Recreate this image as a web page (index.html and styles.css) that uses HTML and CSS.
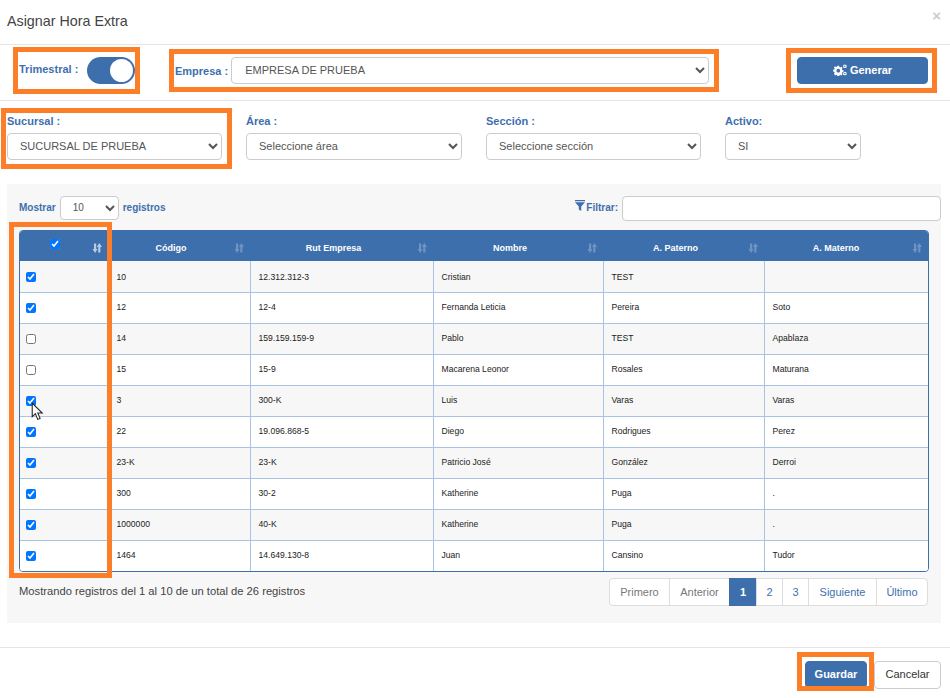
FILE: index.html
```html
<!DOCTYPE html>
<html lang="es">
<head>
    <meta charset="UTF-8">
    <title>Asignar Hora Extra</title>
    <link rel="stylesheet" href="styles.css">
</head>
<body>
    <svg class="icon-defs" width="0" height="0">
        <symbol id="sort" viewBox="0 0 10 10">
            <path d="M0.500 6h1.500V0.500h2.200V6h1.300L3.100 10zM4.800 4h1.400V9.500h2.200V4H10L7.400 0z"/>
        </symbol>
    </svg>

    <div class="modal">
        <div class="modal-header">
            <h4>Asignar Hora Extra</h4>
            <span class="close">&times;</span>
        </div>

        <div class="top-row">
            <div class="trimestral">
                <label>Trimestral :</label>
                <span class="toggle"><span class="toggle-knob"></span></span>
            </div>
            <div class="empresa">
                <label>Empresa :</label>
                <select class="field"><option>EMPRESA DE PRUEBA</option></select>
            </div>
            <button type="button" class="btn btn-primary btn-generar">
                <svg class="gear" viewBox="0 0 16 14" width="14" height="12">
                    <path fill="#fff" fill-rule="evenodd" d="M5 2h2l.3 1.5 1 .5 1.4-.8 1.3 1.4-.8 1.3.4 1.1 1.4.3v2l-1.4.3-.4 1.1.8 1.3-1.3 1.4-1.4-.8-1 .4-.3 1.5H5l-.3-1.5-1-.4-1.4.8L1 11.5l.8-1.3-.4-1.1L0 8.800v-2l1.400-.3.400-1.100L1 4.100l1.300-1.400 1.400.8 1-.5zM6 5.600a2.200 2.200 0 1 0 0 4.400 2.200 2.200 0 0 0 0-4.400z"/>
                    <path fill="none" stroke="#fff" stroke-width="1.300" d="M13.700 1.100a1.500 1.500 0 1 0 0 3 1.500 1.500 0 0 0 0-3zM13.700 9.600a1.500 1.500 0 1 0 0 3 1.500 1.500 0 0 0 0-3z"/>
                </svg>
                Generar
            </button>
        </div>

        <div class="filters">
            <div class="filter filter-sucursal">
                <label>Sucursal :</label>
                <select class="field"><option>SUCURSAL DE PRUEBA</option></select>
            </div>
            <div class="filter filter-area">
                <label>Área :</label>
                <select class="field"><option>Seleccione área</option></select>
            </div>
            <div class="filter filter-seccion">
                <label>Sección :</label>
                <select class="field"><option>Seleccione sección</option></select>
            </div>
            <div class="filter filter-activo">
                <label>Activo:</label>
                <select class="field"><option>SI</option></select>
            </div>
        </div>

        <div class="panel">
            <div class="panel-top">
                <div class="length">
                    Mostrar
                    <select class="field field-length"><option>10</option></select>
                    registros
                </div>
                <div class="search">
                    <svg class="funnel" viewBox="0 0 10 11" width="10" height="11">
                        <path fill="#3e6fad" d="M0 0h10v1.200H0zM0 2.200h10L6.200 6.500V11L3.800 9.600V6.500z"/>
                    </svg>
                    <span>Filtrar:</span>
                    <input type="text" class="field search-input">
                </div>
            </div>

            <div class="table-wrap">
                <table>
                    <colgroup>
                        <col class="col-check">
                        <col class="col-codigo">
                        <col class="col-rut">
                        <col class="col-nombre">
                        <col class="col-paterno">
                        <col class="col-materno">
                    </colgroup>
                    <thead>
                        <tr>
                            <th class="th-check"><input type="checkbox" checked><svg class="sort sort-on"><use href="#sort"/></svg></th>
                            <th>Código<svg class="sort"><use href="#sort"/></svg></th>
                            <th>Rut Empresa<svg class="sort"><use href="#sort"/></svg></th>
                            <th>Nombre<svg class="sort"><use href="#sort"/></svg></th>
                            <th>A. Paterno<svg class="sort"><use href="#sort"/></svg></th>
                            <th class="th-last">A. Materno<svg class="sort"><use href="#sort"/></svg></th>
                        </tr>
                    </thead>
                    <tbody>
                        <tr><td><input type="checkbox" checked></td><td>10</td><td>12.312.312-3</td><td>Cristian</td><td>TEST</td><td></td></tr>
                        <tr><td><input type="checkbox" checked></td><td>12</td><td>12-4</td><td>Fernanda Leticia</td><td>Pereira</td><td>Soto</td></tr>
                        <tr><td><input type="checkbox"></td><td>14</td><td>159.159.159-9</td><td>Pablo</td><td>TEST</td><td>Apablaza</td></tr>
                        <tr><td><input type="checkbox"></td><td>15</td><td>15-9</td><td>Macarena Leonor</td><td>Rosales</td><td>Maturana</td></tr>
                        <tr><td><input type="checkbox" checked></td><td>3</td><td>300-K</td><td>Luis</td><td>Varas</td><td>Varas</td></tr>
                        <tr><td><input type="checkbox" checked></td><td>22</td><td>19.096.868-5</td><td>Diego</td><td>Rodrigues</td><td>Perez</td></tr>
                        <tr><td><input type="checkbox" checked></td><td>23-K</td><td>23-K</td><td>Patricio José</td><td>González</td><td>Derroi</td></tr>
                        <tr><td><input type="checkbox" checked></td><td>300</td><td>30-2</td><td>Katherine</td><td>Puga</td><td>.</td></tr>
                        <tr><td><input type="checkbox" checked></td><td>1000000</td><td>40-K</td><td>Katherine</td><td>Puga</td><td>.</td></tr>
                        <tr><td><input type="checkbox" checked></td><td>1464</td><td>14.649.130-8</td><td>Juan</td><td>Cansino</td><td>Tudor</td></tr>
                    </tbody>
                </table>
            </div>

            <div class="panel-bottom">
                <div class="info">Mostrando registros del 1 al 10 de un total de 26 registros</div>
                <ul class="pagination">
                    <li class="disabled w-primero">Primero</li>
                    <li class="disabled w-anterior">Anterior</li>
                    <li class="active w-active">1</li>
                    <li class="w-num">2</li>
                    <li class="w-num">3</li>
                    <li class="w-siguiente">Siguiente</li>
                    <li class="w-ultimo">Último</li>
                </ul>
            </div>
        </div>

        <div class="modal-footer">
            <button type="button" class="btn btn-primary btn-guardar">Guardar</button>
            <button type="button" class="btn btn-default">Cancelar</button>
        </div>
    </div>

    <!-- annotations drawn on top of the screenshot -->
    <div class="mark mark-trimestral"></div>
    <div class="mark mark-empresa"></div>
    <div class="mark mark-generar"></div>
    <div class="mark mark-sucursal"></div>
    <div class="mark mark-column"></div>
    <div class="mark mark-guardar"></div>

    <svg class="cursor" viewBox="0 0 12 18" width="13" height="19">
        <path fill="#fff" stroke="#222" stroke-width="1" d="M1 1v13l3-3 2.200 5.500 2.300-1L6.300 10.500H10.500z"/>
    </svg>
</body>
</html>
```

FILE: styles.css
```css
* {
    box-sizing: border-box;
}

html, body {
    height: 100%;
}

body {
    margin: 0;
    position: relative;
    overflow: hidden;
    background-color: #fff;
    font-family: "Liberation Sans", Arial, sans-serif;
    font-size: 11px;
    color: #333;
}

.icon-defs {
    position: absolute;
}

label {
    flex: none;
    font-weight: bold;
    font-size: 11px;
    color: #3e6fad;
}

.field {
    height: 27px;
    border: 1px solid #ccc;
    border-radius: 4px;
    background-color: #fff;
    padding: 0 8px 2px;
    font-family: inherit;
    font-size: 11px;
    color: #555;
}

.modal-header {
    position: relative;
    height: 45px;
    padding: 13px 7px 0;
    border-bottom: 1px solid #e5e5e5;
}

.modal-header h4 {
    margin: 0;
    font-size: 14.300px;
    line-height: 17px;
    font-weight: normal;
    color: #444;
}

.close {
    position: absolute;
    top: 7px;
    right: 9px;
    font-size: 15px;
    font-weight: bold;
    color: #ccc;
}

.top-row {
    display: flex;
    align-items: center;
    height: 56px;
    padding: 0 22px 4px 19px;
    border-bottom: 1px solid #e5e5e5;
}

.trimestral {
    display: flex;
    align-items: center;
    gap: 9px;
    width: 156px;
}

.trimestral label {
    margin-bottom: 4px;
}

.toggle {
    display: flex;
    justify-content: flex-end;
    align-items: center;
    width: 48px;
    height: 27px;
    padding-right: 2px;
    border-radius: 14px;
    background-color: #3e6fad;
}

.toggle-knob {
    width: 23px;
    height: 23px;
    border-radius: 50%;
    background-color: #fff;
}

.empresa {
    display: flex;
    align-items: center;
    gap: 3px;
    width: 534px;
}

.empresa .field {
    width: 478px;
    padding-left: 9px;
}

.btn {
    border-radius: 4px;
    font-family: inherit;
    font-size: 11px;
    font-weight: bold;
    height: 27px;
    padding: 0 0 2px;
}

.btn-primary {
    border: 1px solid #3e6fad;
    background-color: #3e6fad;
    color: #fff;
}

.btn-generar {
    display: flex;
    justify-content: center;
    align-items: center;
    gap: 3px;
    width: 131px;
    margin-left: auto;
}

.filters {
    display: flex;
    gap: 24px;
    height: 83px;
    padding: 13px 7px 0;
}

.filter {
    display: flex;
    flex-direction: column;
    gap: 5px;
}

.filter label {
    line-height: 14px;
}

.filter-sucursal { width: 215px; }
.filter-area { width: 216px; }
.filter-seccion { width: 215px; }
.filter-activo { width: 136px; }

.panel {
    width: 934px;
    height: 439px;
    margin-left: 7px;
    padding: 12px 0 0 12px;
    background-color: #f7f7f7;
}

.panel-top {
    display: flex;
    justify-content: space-between;
    height: 34px;
}

.length {
    display: flex;
    align-items: flex-start;
    gap: 4px;
    line-height: 23px;
    font-weight: bold;
    font-size: 10px;
    color: #3e6fad;
}

.field-length {
    width: 59px;
    height: 24px;
    font-size: 10px;
    padding-left: 8px;
}

.search {
    display: flex;
    align-items: flex-start;
    font-size: 10px;
    font-weight: bold;
    color: #3e6fad;
    line-height: 23px;
}

.funnel {
    margin-top: 4px;
    margin-right: 1px;
}

.search-input {
    width: 319px;
    height: 25px;
    margin-left: 4px;
}

.table-wrap {
    width: 910px;
    border: 1px solid #3e6fad;
    border-radius: 4px;
    overflow: hidden;
}

table {
    width: 100%;
    table-layout: fixed;
    border-collapse: collapse;
}

.col-check { width: 88px; }
.col-codigo { width: 142px; }
.col-rut { width: 183px; }
.col-nombre { width: 170px; }
.col-paterno { width: 161px; }

th {
    position: relative;
    height: 30px;
    background-color: #3e6fad;
    font-size: 9px;
    font-weight: bold;
    color: #fff;
    text-align: center;
    padding: 3px 16px 0 0;
}

.th-last {
    padding-right: 20px;
}

td {
    height: 31px;
    padding: 0 8px 2px;
    border: 1px solid #a9c4e2;
    font-size: 8.600px;
    color: #222;
    background-color: #fff;
}

tbody tr:first-child td {
    border-top: 0;
    height: 31px;
}

tbody tr:first-child td:not(:first-child) {
    padding: 1px 8px 0;
}

tbody tr:nth-child(odd) td {
    background-color: #f7f7f7;
}

tbody tr:last-child td {
    border-bottom: 0;
}

td:first-child {
    border-left: 0;
    padding-left: 6px;
    padding-bottom: 0;
}

td:last-child {
    border-right: 0;
}

input[type="checkbox"] {
    width: 10px;
    height: 10px;
    margin: 0;
    vertical-align: middle;
}

.th-check {
    padding: 0 18px 0 0;
}

.th-check input {
    margin-top: -6px;
}

.sort {
    position: absolute;
    top: 12px;
    right: 6px;
    width: 10px;
    height: 10px;
    fill: #6f93c2;
}

.th-check .sort {
    right: 6px;
    fill: #b9cbe3;
}

.panel-bottom {
    display: flex;
    justify-content: space-between;
    align-items: flex-start;
    padding-top: 6px;
    padding-right: 13px;
}

.info {
    padding-top: 7px;
    font-size: 11.200px;
    color: #444;
}

.pagination {
    display: flex;
    margin: 0;
    padding: 0;
    list-style: none;
    font-size: 11px;
}

.pagination li {
    height: 28px;
    line-height: 26px;
    text-align: center;
    border: 1px solid #ddd;
    margin-left: -1px;
    background-color: #fff;
    color: #3e6fad;
}

.pagination li.disabled {
    color: #777;
}

.pagination li.active {
    background-color: #3e6fad;
    border-color: #3e6fad;
    color: #fff;
    font-weight: bold;
}

.pagination li:first-child {
    border-radius: 4px 0 0 4px;
}

.pagination li:last-child {
    border-radius: 0 4px 4px 0;
}

.w-primero { width: 61px; }
.w-anterior { width: 61px; }
.w-active { width: 28px; }
.w-num { width: 27px; }
.w-siguiente { width: 69px; }
.w-ultimo { width: 52px; }

.modal-footer {
    display: flex;
    justify-content: flex-end;
    gap: 7px;
    height: 51px;
    margin-top: 24px;
    padding: 13px 9px 0 0;
    border-top: 1px solid #e5e5e5;
}

.btn-guardar {
    width: 62px;
}

.btn-default {
    width: 67px;
    height: 28px;
    border: 1px solid #ccc;
    background-color: #fff;
    color: #333;
    font-weight: normal;
}

/* orange highlight boxes */
.mark {
    position: absolute;
    border: 5px solid #fd7e28;
    pointer-events: none;
}

.mark-trimestral { left: 13px; top: 47px; width: 127px; height: 47px; }
.mark-empresa { left: 169px; top: 49px; width: 550px; height: 43px; }
.mark-generar { left: 786px; top: 48px; width: 151px; height: 45px; }
.mark-sucursal { left: 1px; top: 108px; width: 231px; height: 61px; }
.mark-column { left: 9px; top: 222px; width: 103px; height: 356px; }
.mark-guardar { left: 797px; top: 652px; width: 77px; height: 39px; }

.cursor {
    position: absolute;
    left: 31px;
    top: 402px;
}
```
